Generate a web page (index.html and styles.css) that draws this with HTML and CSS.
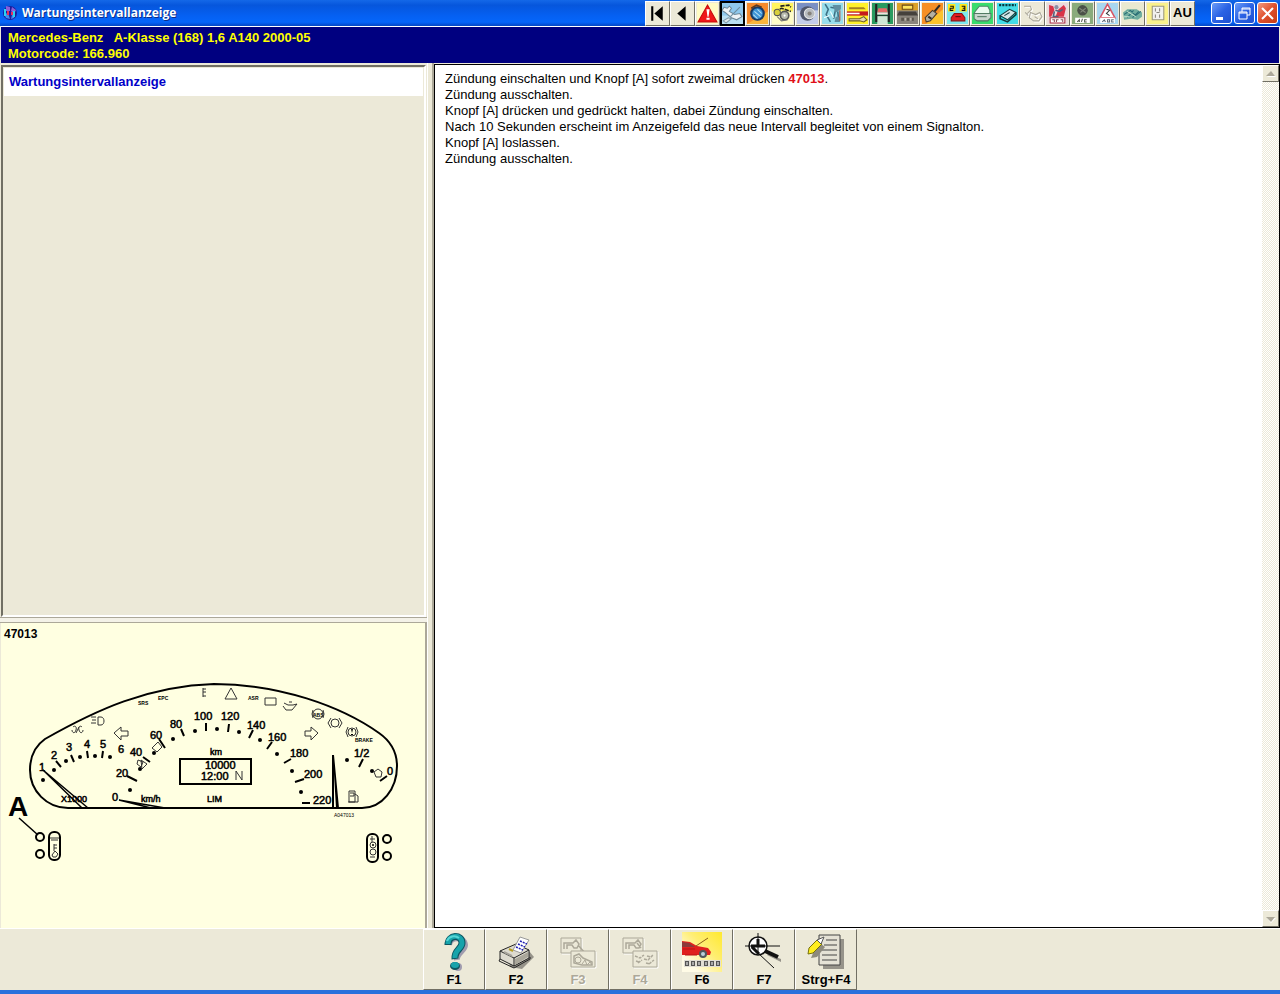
FILE: index.html
```html
<!DOCTYPE html>
<html lang="de">
  <head>
    <meta charset="UTF-8" />
    <meta name="viewport" content="width=device-width, initial-scale=1.0" />
    <title>Wartungsintervallanzeige</title>
    <link rel="stylesheet" href="styles.css">
  </head>
  <body>
    <header class="title-bar">
      <svg class="app-icon" viewBox="0 0 16 16">
        <circle cx="8" cy="8" r="7" fill="#1c1c9c" />
        <path d="M4 1l4 1v4H4zM10 2l4 3-2 4-3-3z" fill="#8a5fd8" />
        <path d="M2 9l4-1 2 6-4-1zM10 10l3-1-1 4-3 1z" fill="#3f8df0" />
        <path d="M3 4v7M12 6v6" stroke="#29d3f0" stroke-width="2" />
        <path d="M6 6v4M10 7v3" stroke="#e5305c" stroke-width="2" />
      </svg>
      <h1 class="title">Wartungsintervallanzeige</h1>

      <nav class="toolbar">
        <button class="tool" aria-label="Erste Seite">
          <svg viewBox="0 0 20 20"><path d="M4 3h2v14H4zM15 3v14l-8-7z" /></svg>
        </button>
        <button class="tool" aria-label="Zurück">
          <svg viewBox="0 0 20 20"><path d="M13 3v14l-8-7z" /></svg>
        </button>
        <button class="tool" aria-label="Warnhinweise">
          <svg viewBox="0 0 20 20">
            <path d="M0 0h20v20H0z" fill="#fffbc4" />
            <path d="M10 2l9 16H1z" fill="#f01818" stroke="#c40c0c" />
            <path d="M9 6h3l-1 7h-1zM9 14h3v2H9z" fill="#fff" />
          </svg>
        </button>
        <button class="tool active" aria-label="Wartung">
          <svg viewBox="0 0 20 20">
            <path d="M0 0h20v20H0z" fill="#8fc8ec" />
            <path d="M0 12h20v8H0z" fill="#b9dff2" />
            <path d="M2 4l3 1 2-2 2 2-2 3 5 3 5-1 2 3-5 3-5-2-6-5-3-2z" fill="#eef3f6" stroke="#6d8797" />
            <path d="M1 17l5-3 3 1-5 4z" fill="#dfe9ee" stroke="#7d97a7" />
            <path d="M8 13l9-9" stroke="#6f8d9e" fill="none" />
          </svg>
        </button>
        <button class="tool" aria-label="Zahnriemen">
          <svg viewBox="0 0 20 20">
            <path d="M0 0h20v20H0z" fill="#f58a2c" />
            <path d="M0 20h20V8z" fill="#fbb63c" />
            <circle cx="10" cy="10" r="6" fill="#3f94d6" stroke="#173a66" stroke-width="2" />
            <path d="M7 8l6 5M10 6l4 4M6 11l4 4" stroke="#b5e0f6" />
            <path d="M4 5l5-3 5 2" fill="none" stroke="#5c3a22" stroke-width="1.5" />
          </svg>
        </button>
        <button class="tool" aria-label="Antriebsriemen">
          <svg viewBox="0 0 20 20">
            <path d="M0 0h20v20H0z" fill="#fffcc8" />
            <path d="M0 0h20v8H0z" fill="#fff45e" />
            <path d="M8 3l8-1 2 2M3 8l6-3 9 3" fill="none" stroke="#222" stroke-width="1.5" stroke-dasharray="4 1" />
            <circle cx="12" cy="12" r="4" fill="#b9bcae" stroke="#555" stroke-width="1.5" />
            <circle cx="5" cy="9" r="3" fill="#d8cf3c" stroke="#555" />
            <circle cx="12" cy="12" r="1" fill="#fff" />
            <path d="M5 13l4 4 6-1" stroke="#777" fill="none" />
          </svg>
        </button>
        <button class="tool" aria-label="Räder und Reifen">
          <svg viewBox="0 0 20 20">
            <path d="M0 0h20v20H0z" fill="#c3cde9" />
            <path d="M0 0h20v7H0z" fill="#7b90c4" />
            <circle cx="10" cy="10" r="7" fill="#50576c" />
            <circle cx="12" cy="10" r="5" fill="#b8bcc0" stroke="#e6e6e6" />
            <circle cx="12" cy="10" r="2" fill="#85817b" />
          </svg>
        </button>
        <button class="tool" aria-label="Radeinstellung">
          <svg viewBox="0 0 20 20">
            <path d="M0 0h20v20H0z" fill="#98ddeb" />
            <path d="M3 1l3 5-2 5 4 7M8 4l5 1 4-2M13 6l-2 9M15 8l1 10" fill="none" stroke="#3c7185" stroke-width="1.5" />
            <path d="M10 2h8v4l-5 3zM13 13h4v5h-5z" fill="#5f8fa1" />
            <path d="M8 8l3 6M2 14l5-2" stroke="#f4ffff" />
            <path d="M17 7v10" stroke="#b3513d" />
          </svg>
        </button>
        <button class="tool" aria-label="Hebepunkte">
          <svg viewBox="0 0 20 20">
            <path d="M0 0h20v20H0z" fill="#fff02a" />
            <path d="M2 4h14l2 2H2z" fill="#a48022" />
            <path d="M0 8h20v4H0z" fill="#c51a1c" />
            <path d="M0 10h12" stroke="#fff" stroke-width="1.5" />
            <path d="M2 15h10l4-2 3 3-3 2-4-1H2z" fill="#e5d7b0" stroke="#6c5e29" />
          </svg>
        </button>
        <button class="tool" aria-label="Hebebühne">
          <svg viewBox="0 0 20 20">
            <path d="M0 0h20v20H0z" fill="#299b60" />
            <path d="M5 12h10v8H5z" fill="#cfe5d4" />
            <path d="M4 1v17M16 1v17" stroke="#222" stroke-width="2" />
            <path d="M6 5h8l1 4H5z" fill="#e66a6a" />
            <path d="M5 9h10v2H5z" fill="#f6dede" />
            <path d="M4 12h12" stroke="#1b392b" />
          </svg>
        </button>
        <button class="tool" aria-label="Motorraum">
          <svg viewBox="0 0 20 20">
            <path d="M0 0h20v20H0z" fill="#8a857c" />
            <path d="M0 0h20v7H0z" fill="#dba228" />
            <path d="M5 2h10v4H5z" fill="#ffe45d" stroke="#6a4613" />
            <path d="M2 8h16l2 4H0z" fill="#45413c" />
            <path d="M4 14h12v3H4z" fill="#5a554d" />
            <path d="M7 14h2v3H7zM12 14h2v3h-2z" fill="#b8b1a7" />
          </svg>
        </button>
        <button class="tool" aria-label="Motormanagement">
          <svg viewBox="0 0 20 20">
            <path d="M0 0h20v20H0z" fill="#f68f26" />
            <path d="M4 20h16V6z" fill="#fbc22d" />
            <path d="M3 14l7-7 4 3-6 7-4 1z" fill="#b5b0a3" stroke="#43392d" />
            <path d="M12 8l5-6M6 13l3 2" stroke="#302a25" stroke-width="2" />
          </svg>
        </button>
        <button class="tool" aria-label="Fehlercodes">
          <svg viewBox="0 0 20 20">
            <path d="M0 0h20v20H0z" fill="#7de8ed" />
            <path d="M1 1h7v7H1zM12 1h7v7h-7z" fill="#ffe719" />
            <path d="M3 3h3v2H3v2h3M14 3h3v4h-3M15 5h2" stroke="#111" fill="none" />
            <path d="M4 17v-3l3-4h7l3 4v3z" fill="#e01a20" stroke="#8e1010" />
            <path d="M8 13h5" stroke="#550c0c" />
          </svg>
        </button>
        <button class="tool" aria-label="Karosserie">
          <svg viewBox="0 0 20 20">
            <path d="M0 0h20v20H0z" fill="#39dc6d" />
            <path d="M3 8l4-5h8l2 4v3H2z" fill="#eafaef" stroke="#52876a" />
            <path d="M2 10h16v4l-3 3H5l-3-2z" fill="#c8d5cd" stroke="#527b64" />
            <path d="M5 13h9" stroke="#527a63" />
          </svg>
        </button>
        <button class="tool" aria-label="Klimaanlage">
          <svg viewBox="0 0 20 20">
            <path d="M0 0h20v20H0z" fill="#43dce7" />
            <path d="M2 2h16" stroke="#07363b" stroke-width="2" stroke-dasharray="2 1" />
            <path d="M3 12l9-6 6 3-8 7z" fill="#d4e6e8" stroke="#123b3d" />
            <path d="M3 12v3l7 3 8-7V9" fill="none" stroke="#123b3d" stroke-width="1.5" />
            <path d="M7 12l5-3" stroke="#123b3d" />
          </svg>
        </button>
        <button class="tool" aria-label="Airbag" disabled>
          <svg viewBox="0 0 20 20">
            <path d="M2 3h6l1 3-4 4M8 9l5 2 4-2 2 4-3 4h-5l-4-3zM12 13l3 2M3 9l3 3" fill="none" stroke="#fff" transform="translate(1 1)" />
            <path d="M2 3h6l1 3-4 4M8 9l5 2 4-2 2 4-3 4h-5l-4-3zM12 13l3 2M3 9l3 3" fill="none" stroke="#aaa79a" />
          </svg>
        </button>
        <button class="tool" aria-label="SRS">
          <svg viewBox="0 0 20 20">
            <path d="M0 0h20v20H0z" fill="#ead9dc" />
            <path d="M2 2l4 1 1 4-3 6H2zM11 6l5-4 2 3-2 8H8z" fill="#d83448" />
            <circle cx="9" cy="4" r="2" fill="#8a90a5" />
            <path d="M8 7l4 1 3-2M7 8l-1 5 5 0" stroke="#53617c" stroke-width="1.5" fill="none" />
            <path d="M3 14h14v5H3z" fill="#fff" stroke="#aa3344" />
            <path d="M5 16h2v2M9 18v-2h2M13 16h2v2" stroke="#8f5058" fill="none" />
          </svg>
        </button>
        <button class="tool" aria-label="Klima A/C">
          <svg viewBox="0 0 20 20">
            <path d="M0 0h20v20H0z" fill="#8aab7c" />
            <circle cx="10" cy="7" r="5" fill="#4a5148" />
            <path d="M7 5l6 4M8 9l5-4" stroke="#82897b" />
            <path d="M3 14h14v5H3z" fill="#fff" />
            <path d="M5 18l2-2v2M10 15l-1 3M14 16h-2v2h2" stroke="#545b50" fill="none" />
          </svg>
        </button>
        <button class="tool" aria-label="ABS">
          <svg viewBox="0 0 20 20">
            <path d="M0 0h20v20H0z" fill="#a9d7ef" />
            <path d="M10 1l7 13H3z" fill="#fff" stroke="#d85666" stroke-width="1.5" />
            <path d="M9 6l3 1-3 3 3 2" stroke="#333" fill="none" />
            <path d="M3 14h14v5H3z" fill="#fff" />
            <path d="M5 18l2-2 1 2M10 16h2v2h-2zM16 16h-2v2h2" stroke="#5f6b78" fill="none" />
          </svg>
        </button>
        <button class="tool" aria-label="Elektrik">
          <svg viewBox="0 0 20 20">
            <path d="M0 0h20v20H0z" fill="#e9e9d0" />
            <path d="M1 9l4-3h9l5 3v4l-4 3-6-1-7 1z" fill="#6fad9f" />
            <path d="M2 11l6-4 5 5 5-4M5 14l6-7M10 14l6-6" stroke="#2b6f76" fill="none" />
            <path d="M5 8l8 5M2 13h5" stroke="#c9e6cf" />
          </svg>
        </button>
        <button class="tool" aria-label="Sicherungen">
          <svg viewBox="0 0 20 20">
            <path d="M0 0h20v20H0z" fill="#faf18c" />
            <path d="M5 3h11v13H5z" fill="#f2f2ee" stroke="#9a977f" />
            <path d="M8 5v3M12 5v3M8 11v3M12 11v3M9 9h3" stroke="#8a877e" />
          </svg>
        </button>
        <button class="tool tool-text">AU</button>
      </nav>

      <div class="window-controls">
        <button class="control" aria-label="Minimieren">
          <svg viewBox="0 0 19 19"><path d="M4 13h7v3H4z" fill="#fff" /></svg>
        </button>
        <button class="control" aria-label="Wiederherstellen">
          <svg viewBox="0 0 19 19">
            <path d="M7 8V4h8v7h-3M7 5h8M4 8h8v7H4zM4 9h8" fill="none" stroke="#fff" />
          </svg>
        </button>
        <button class="control close" aria-label="Schließen">
          <svg viewBox="0 0 19 19"><path d="M4 4l11 11M15 4L4 15" stroke="#fff" stroke-width="2" /></svg>
        </button>
      </div>
    </header>

    <div class="vehicle-info">
      <p>Mercedes-Benz&nbsp;&nbsp; A-Klasse (168) 1,6 A140 2000-05</p>
      <p>Motorcode: 166.960</p>
    </div>

    <main class="workspace">
      <aside class="sidebar">
        <nav class="topic-list">
          <button class="topic">Wartungsintervallanzeige</button>
        </nav>
        <div class="split-horizontal"></div>
        <figure class="drawing">
          <figcaption>47013</figcaption>
          <svg class="cluster" viewBox="1 650 424 220">
            <!-- housing -->
            <path class="outline" d="M68 808H362C382 808 397 789 397 766C397 751 389 740 379 733C341 706 279 684 214 684C148 686 96 710 45 739C35 746 30 757 30 770C30 791 47 808 68 808z" />
            <!-- dots -->
            <g>
              <circle cx="43" cy="780" r="2" /><circle cx="54" cy="770" r="2" />
              <circle cx="66" cy="761" r="2" /><circle cx="80" cy="757" r="2" />
              <circle cx="95" cy="756" r="2" /><circle cx="110" cy="757" r="2" />
              <circle cx="130" cy="790" r="2" /><circle cx="140" cy="769" r="2" />
              <circle cx="154" cy="753" r="2" /><circle cx="173" cy="739" r="2" />
              <circle cx="195" cy="731" r="2" /><circle cx="217" cy="729" r="2" />
              <circle cx="239" cy="732" r="2" /><circle cx="260" cy="740" r="2" />
              <circle cx="277" cy="754" r="2" /><circle cx="292" cy="771" r="2" />
              <circle cx="301" cy="792" r="2" /><circle cx="347" cy="760" r="2" />
              <circle cx="372" cy="771" r="2" />
            </g>
            <!-- scale marks -->
            <path class="mark" d="M56 761l5 6M71 755l3 7M87 751l1 7M103 751l-1 7M127 776l10 5M143 757l7 5M159 739l6 9M181 729l3 7M206 723v8M229 724l-1 8M253 730l-4 8M272 742l-5 7M291 759l-7 4M304 779l-9 3M302 803h8M363 759l-4 8M387 776l-7 5" />
            <!-- needles -->
            <path class="needle" d="M43 770L82 808M43 770L88 808M119 800L165 808M119 800L151 808" />
            <path d="M332 755h2l5 53h-3l-2-34v34h-2z" />
            <!-- digits -->
            <g class="digits">
              <text x="39" y="771">1</text><text x="51" y="759">2</text>
              <text x="66" y="751">3</text><text x="84" y="748">4</text>
              <text x="100" y="748">5</text><text x="118" y="753">6</text>
              <text x="112" y="801">0</text><text x="116" y="777">20</text>
              <text x="130" y="756">40</text><text x="150" y="739">60</text>
              <text x="170" y="728">80</text><text x="194" y="720">100</text>
              <text x="221" y="720">120</text><text x="247" y="729">140</text>
              <text x="268" y="741">160</text><text x="290" y="757">180</text>
              <text x="304" y="778">200</text><text x="313" y="804">220</text>
              <text x="354" y="757">1/2</text><text x="387" y="775">0</text>
              <text x="205" y="769">10000</text><text x="201" y="780">12:00</text>
            </g>
            <g class="units">
              <text x="61" y="802">X1000</text><text x="141" y="802">km/h</text>
              <text x="210" y="755">km</text><text x="207" y="802">LIM</text>
            </g>
            <g class="tiny">
              <text x="138" y="705">SRS</text><text x="158" y="700">EPC</text>
              <text x="248" y="700">ASR</text><text x="355" y="742">BRAKE</text>
              <text x="313" y="717">ABS</text>
            </g>
            <text class="code" x="334" y="817">A047013</text>
            <!-- display -->
            <path class="outline" d="M180 759h71v25h-71z" />
            <path class="thin" d="M236 780v-9l6 9v-9" />
            <!-- warning lamps -->
            <path class="thin" d="M91 717h5M92 720h4M91 723h5M98 717h3c4 0 4 8 0 8h-3zM73 727c2-2 4 0 3 3c-1 4-4 3-4 0M82 727c-2-2-4 0-3 3c1 4 4 3 4 0M76 733l3-6M203 688v9M203 689h3M203 692h3M203 696h3M231 688l6 11h-12zM265 698h11v7h-11zM284 703l4 2h5l4-1-5 6h-6l-3-4M289 702h3" />
            <circle class="thin" cx="318" cy="714" r="5" />
            <circle class="thin" cx="335" cy="723" r="4" />
            <circle class="thin" cx="352" cy="732" r="4" />
            <path class="thin" d="M313 710l-1 4 1 4M323 710l1 4-1 4M331 718l-3 5 3 5M339 718l3 5-3 5M348 727l-2 5 2 5M356 727l2 5-2 5" />
            <path d="M351 729h2l-1 4zM351 734h2v1h-2z" />
            <!-- turn signals -->
            <path class="thin" d="M114 733l7-6v4h7v5h-7v4zM318 733l-7-6v4h-6v5h6v4z" />
            <path class="thin" d="M152 748l6-6 4 5-5 5zM138 760l5 2-2 5-4-3zM141 760l6 4-5 5zM374 772l4-3 4 3-1 5h-5z" />
            <path class="thin" d="M349 802v-11h6v11zM350 793h4v3h-4M355 794l3 2v6h-2M348 802h8" />
            <!-- call-out and knobs -->
            <text class="callout" x="8" y="816">A</text>
            <path class="needle" d="M19 818l19 17" />
            <g class="knob">
              <circle cx="40" cy="837" r="4" /><circle cx="40" cy="854" r="4" />
              <circle cx="387" cy="839" r="4" /><circle cx="387" cy="856" r="4" />
              <rect x="49" y="832" width="11" height="28" rx="5" />
              <rect x="367" y="834" width="11" height="28" rx="5" />
            </g>
            <path class="thin" d="M50 838h9M51 840h7M54 844v7M54 845h3M54 848h3M52 855l3-4 3 3-2 3h-3zM370 839h5M372 836v6M370 857h5" />
            <circle class="thin" cx="373" cy="845" r="3" />
            <circle class="thin" cx="373" cy="852" r="3" />
            <circle cx="373" cy="845" r="1" />
          </svg>
        </figure>
      </aside>

      <div class="split-vertical"></div>

      <section class="content">
        <div class="instructions">
          <p>Zündung einschalten und Knopf [A] sofort zweimal drücken <b>47013</b>.</p>
          <p>Zündung ausschalten.</p>
          <p>Knopf [A] drücken und gedrückt halten, dabei Zündung einschalten.</p>
          <p>Nach 10 Sekunden erscheint im Anzeigefeld das neue Intervall begleitet von einem Signalton.</p>
          <p>Knopf [A] loslassen.</p>
          <p>Zündung ausschalten.</p>
        </div>
        <div class="scrollbar">
          <button class="scroll-btn" aria-label="Nach oben" disabled>
            <svg viewBox="0 0 12 12"><path d="M2 9h9l-5-5z" fill="#fff" /><path d="M1 8h9L6 3z" fill="#aca899" /></svg>
          </button>
          <button class="scroll-btn" aria-label="Nach unten" disabled>
            <svg viewBox="0 0 12 12"><path d="M2 5h9l-5 5z" fill="#fff" /><path d="M1 4h9L6 9z" fill="#aca899" /></svg>
          </button>
        </div>
      </section>
    </main>

    <footer class="function-bar">
      <button class="fn">
        <svg viewBox="0 0 40 40">
          <path d="M15 13c1-9 15-9 16 0c0 6-9 8-8 15" fill="none" stroke="#a09caf" stroke-width="6" />
          <circle cx="24" cy="35" r="4" fill="#a09caf" />
          <path d="M14 13c0-11 14-11 14-2c0 6-8 7-7 16" fill="none" stroke="#0c5560" stroke-width="7" />
          <path d="M14 12c0-10 14-10 14-1c0 6-8 7-7 15" fill="none" stroke="#16a3ab" stroke-width="5" />
          <path d="M13 9c2-5 8-6 12-3" fill="none" stroke="#55d6d5" stroke-width="2" />
          <ellipse cx="21" cy="34" rx="5" ry="4" fill="#0c5560" />
          <ellipse cx="21" cy="33" rx="4" ry="3" fill="#16a3ab" />
        </svg>
        <span>F1</span>
      </button>
      <button class="fn">
        <svg viewBox="0 0 40 40">
          <path d="M14 35l12 2 12-12-5-6-20 10z" fill="#96938a" />
          <path d="M4 19L20 12l13 6v8L18 34 4 27z" fill="#dedbd0" stroke="#222" />
          <path d="M4 19l14 7 15-8M18 26v8M4 27l-1 2 15 7 16-9v-2" fill="none" stroke="#222" />
          <path d="M19 27l13-7v5l-13 8z" fill="#aaa79b" />
          <path d="M17 18L24 5l9 3-8 13z" fill="#fff" stroke="#999" />
          <path d="M24 9l7 3M22 12l7 3M20 15l7 3" stroke="#2121b4" stroke-width="1.5" stroke-dasharray="2 1" />
          <path d="M8 20l8 4" stroke="#a6a39b" stroke-width="2" />
          <path d="M13 17l4 2" stroke="#b79e20" stroke-width="2" />
        </svg>
        <span>F2</span>
      </button>
      <button class="fn" disabled>
        <svg viewBox="0 0 40 40">
          <path d="M3 6h20v15H3zM13 19h24v16H13z" fill="none" stroke="#fff" transform="translate(1 1)" />
          <path d="M3 6h20v15H3z" fill="#ece9d8" stroke="#aca899" />
          <path d="M6 17v-6h9l3-3 3 4-2 4h-3l-2-3H9v4M20 13l7 8" fill="none" stroke="#aca899" stroke-width="1.5" />
          <path d="M13 19h24v16H13z" fill="#ece9d8" stroke="#aca899" />
          <path d="M16 31v-7l5-2 4 4 9 4v3H24z" fill="none" stroke="#aca899" stroke-width="1.5" />
          <circle cx="20" cy="28" r="3" fill="none" stroke="#aca899" />
          <path d="M24 32l3-4 2 5 3-3 2 3" fill="none" stroke="#aca899" />
        </svg>
        <span>F3</span>
      </button>
      <button class="fn" disabled>
        <svg viewBox="0 0 40 40">
          <path d="M3 6h20v15H3zM13 19h24v16H13z" fill="none" stroke="#fff" transform="translate(1 1)" />
          <path d="M3 6h20v15H3z" fill="#ece9d8" stroke="#aca899" />
          <path d="M6 17v-6h9l3-3 3 4-2 4h-3l-2-3H9v4M17 11l4 5" fill="none" stroke="#aca899" stroke-width="1.5" />
          <path d="M13 19h24v16H13z" fill="#ece9d8" stroke="#aca899" />
          <path d="M15 24l5 2 4-3M18 31l4-3M26 31l4 1M24 27l4 1 5-5M16 29l3 1M29 32l5-4M27 24l4 1" fill="none" stroke="#aca899" stroke-width="1.5" stroke-dasharray="3 1" />
        </svg>
        <span>F4</span>
      </button>
      <button class="fn">
        <svg viewBox="0 0 40 40">
          <defs>
            <linearGradient id="sunset" x1="1" y1="0" x2="0" y2="1">
              <stop offset="0" stop-color="#ffe92e" />
              <stop offset="0.4" stop-color="#ffee72" />
              <stop offset="0.8" stop-color="#fffbe6" />
            </linearGradient>
          </defs>
          <path d="M0 0h40v40H0z" fill="url(#sunset)" />
          <path d="M0 9l8 1 7 4 11 2 3 4-1 3H0z" fill="#e0201e" />
          <path d="M0 10l7 1 6 4H0z" fill="#8b3a3a" />
          <path d="M14 14l12-8" stroke="#8c5b17" />
          <path d="M1 17h12M3 23h12" stroke="#b81216" />
          <circle cx="21" cy="22" r="4" fill="#51565c" />
          <circle cx="21" cy="22" r="2" fill="#bcd0dc" />
          <path d="M2 28h37v7H2z" fill="#e1ded5" />
          <path d="M3 29h4v5H3zM9 29h4v5H9zM15 29h4v5h-4zM22 29h4v5h-4zM28 29h4v5h-4zM34 29h4v5h-4z" fill="#555" />
          <path d="M5 30v3M11 30v3M17 30v3M24 30v3M30 30v3M36 30v3" stroke="#fff" />
        </svg>
        <span>F6</span>
      </button>
      <button class="fn">
        <svg viewBox="0 0 40 40">
          <path d="M24 22l13 5v3l-14-7z" fill="#96938a" />
          <circle cx="14" cy="14" r="9" fill="#fff" stroke="#111" stroke-width="1.5" />
          <path d="M14 1v20M1 14h35M14 21l16 15" stroke="#111" fill="none" />
          <path d="M14 7v8M7 14h14M8 15l7 7" stroke="#111" stroke-width="3" />
          <path d="M21 19l13 6" stroke="#111" stroke-width="4" />
        </svg>
        <span>F7</span>
      </button>
      <button class="fn">
        <svg viewBox="0 0 40 40">
          <path d="M17 7h21v30H17z" fill="#96938a" />
          <path d="M13 3h21v30H13z" fill="#e5e2d6" stroke="#444" />
          <path d="M20 8h11M18 13h13M16 18h15M16 23h15M16 28h15" stroke="#444" />
          <path d="M5 26l3-7 7-7 4 3-8 10z" fill="#8d8a7d" />
          <path d="M2 22l1-6L11 8l5 4-9 9z" fill="#ffee1e" stroke="#77720b" />
          <path d="M11 8l7-3-3 7z" fill="#fff" stroke="#555" />
        </svg>
        <span>Strg+F4</span>
      </button>
    </footer>
  </body>
</html>
```
FILE: styles.css
```css
* {
  box-sizing: border-box;
  margin: 0;
  padding: 0;
}

body {
  display: flex;
  flex-direction: column;
  min-height: 100vh;
  background: #ece9d8;
  font-family: "Liberation Sans", Arial, sans-serif;
  font-size: 13px;
  line-height: 16px;
  color: #000;
}

button {
  font: inherit;
  color: inherit;
}

svg {
  display: block;
}

/* title bar */
.title-bar {
  display: flex;
  align-items: center;
  height: 26px;
  padding: 0 2px;
  background: linear-gradient(#1468e8, #0656dc 20%, #0560f2 60%, #0566fa 85%, #0446c4);
}

.app-icon {
  width: 16px;
  height: 16px;
}

.title {
  flex: 1;
  padding-left: 4px;
  font-family: "Open Sans", "Noto Sans", sans-serif;
  font-size: 12px;
  font-weight: 700;
  color: #fff;
  text-shadow: 1px 1px 0 #0b2d8a;
}

.toolbar {
  display: flex;
}

.tool {
  width: 25px;
  height: 25px;
  padding: 1px;
  background: #ece9d8;
  border: 1px solid;
  border-color: #fff #716f64 #716f64 #fff;
}

.tool svg {
  width: 21px;
  height: 21px;
}

.tool.active {
  border: 2px solid #000;
  padding: 0;
}

.tool-text {
  font-weight: 700;
}

.window-controls {
  display: flex;
  gap: 2px;
  margin-left: 16px;
}

.control {
  width: 21px;
  height: 22px;
  border: 1px solid #fff;
  border-radius: 3px;
  background: linear-gradient(135deg, #6a9cf8, #2a62e4 50%, #1d4fd0);
}

.control svg {
  width: 19px;
  height: 19px;
}

.close {
  background: linear-gradient(135deg, #f09a80, #e0502c 50%, #c43c14);
}

/* vehicle line */
.vehicle-info {
  margin: 0 1px;
  padding: 3px 7px 1px;
  border-top: 1px solid #fff;
  background: #000080;
  color: #ff0;
  font-weight: 700;
}

/* work area */
.workspace {
  flex: 1;
  display: flex;
}

.sidebar {
  display: flex;
  flex-direction: column;
  width: 427px;
}

.topic-list {
  flex: 1;
  margin: 2px 1px 0;
  padding: 1px;
  border: 2px solid;
  border-color: #716f64 #fff #fff #716f64;
}

.topic {
  display: block;
  width: 100%;
  padding: 6px 5px;
  border: 0;
  background: #fff;
  color: #0000c8;
  font-weight: 700;
  text-align: left;
}

.split-horizontal {
  height: 6px;
  border-top: 1px solid #aca899;
  border-bottom: 1px solid #aca899;
  background: #f4f2e8;
}

.drawing {
  height: 305px;
  margin-left: 1px;
  padding: 3px 0;
  border-right: 2px solid #aca899;
  background: #ffffe1;
}

.drawing figcaption {
  padding: 0 3px;
  height: 24px;
  font-size: 12px;
  font-weight: 700;
}

.split-vertical {
  width: 7px;
  border-left: 1px solid #fff;
  border-right: 2px solid #aca899;
}

/* instrument cluster drawing */
.cluster {
  width: 100%;
  fill: #000;
}

.outline,
.mark,
.knob {
  fill: none;
  stroke: #000;
  stroke-width: 2;
}

.needle {
  fill: none;
  stroke: #000;
  stroke-width: 1.5;
}

.thin {
  fill: none;
  stroke: #333;
  stroke-width: 1;
}

.digits {
  font-size: 11px;
  stroke: #000;
  stroke-width: 0.5;
}

.units {
  font-size: 9px;
  stroke: #000;
  stroke-width: 0.5;
}

.tiny {
  font-size: 5px;
  font-weight: 700;
}

.code {
  font-size: 5px;
}

.callout {
  font-size: 28px;
  font-weight: 700;
}

/* instructions */
.content {
  flex: 1;
  display: flex;
  margin-top: 1px;
  border: 1px solid #000;
  background: #fff;
}

.instructions {
  flex: 1;
  padding: 6px 10px;
}

.instructions b {
  color: #e01018;
}

.scrollbar {
  display: flex;
  flex-direction: column;
  justify-content: space-between;
  width: 17px;
  background: repeating-conic-gradient(#fff 0 25%, #ece9d8 0 50%) 0 0 / 2px 2px;
}

.scroll-btn {
  width: 17px;
  height: 17px;
  padding: 2px;
  background: #ece9d8;
  border: 1px solid;
  border-color: #fff #716f64 #716f64 #fff;
}

.scroll-btn svg {
  width: 12px;
  height: 12px;
}

/* function keys */
.function-bar {
  display: flex;
  justify-content: center;
  border-top: 1px solid #fff;
  border-bottom: 4px solid #2a70dc;
}

.fn {
  display: flex;
  flex-direction: column;
  align-items: center;
  width: 62px;
  height: 61px;
  padding: 2px 0 0;
  background: #ece9d8;
  border: 1px solid;
  border-color: #fff #716f64 #716f64 #fff;
  font-weight: 700;
}

.fn svg {
  width: 40px;
  height: 40px;
}

.fn:disabled {
  color: #aca899;
  text-shadow: 1px 1px 0 #fff;
}
```
